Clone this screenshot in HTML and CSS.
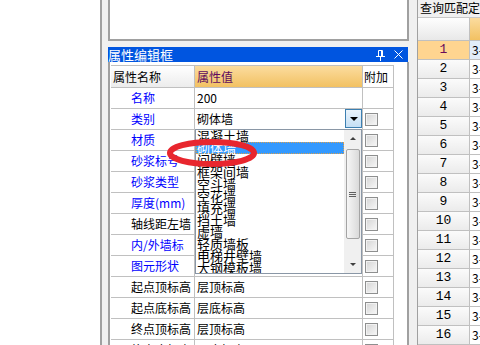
FILE: index.html
```html
<!DOCTYPE html>
<html lang="zh-CN">
<head>
    <meta charset="UTF-8">
    <title>属性编辑框</title>
    <link rel="stylesheet" href="styles.css">
</head>
<body>
<div class="app">
    <div class="blank"></div>
    <div class="split"></div>
    <div class="center">
        <div class="top-box"></div>
        <div class="title">
            <span class="title-text">属性编辑框</span>
            <svg class="pin" width="9" height="11" viewBox="0 0 9 11">
                <path d="M2.5 0.5 V6 M6.5 0.5 V6 M2.5 0.5 H6.5 M5.5 1 V6 M0 6.5 H9 M4.5 6.5 V11" stroke="#fff" fill="none"/>
            </svg>
            <svg class="close" width="9" height="9" viewBox="0 0 9 9">
                <path d="M0.5 0.5 L8.5 8.5 M8.5 0.5 L0.5 8.5" stroke="#fff" fill="none"/>
            </svg>
        </div>
        <div class="grid-area">
            <div class="prop">
                <div class="hd c1">属性名称</div>
                <div class="hd c2 orange">属性值</div>
                <div class="hd c3">附加</div>

                <div class="c1 lb blue">名称</div>
                <div class="c2">200</div>
                <div class="c3"></div>

                <div class="c1 lb blue">类别</div>
                <div class="c2 combo">砌体墙
                    <span class="combo-btn"><i class="tri-down"></i></span>
                    <div class="droplist">
                        <div class="items">
                            <div class="item">混凝土墙</div>
                            <div class="item sel">砌体墙</div>
                            <div class="item">间壁墙</div>
                            <div class="item">框架间墙</div>
                            <div class="item">空斗墙</div>
                            <div class="item">空花墙</div>
                            <div class="item">填充墙</div>
                            <div class="item">挡土墙</div>
                            <div class="item">虚墙</div>
                            <div class="item">轻质墙板</div>
                            <div class="item">电梯井壁墙</div>
                            <div class="item">大钢模板墙</div>
                        </div>
                        <div class="sb">
                            <div class="sb-arrow"><i class="tri-up"></i></div>
                            <div class="thumb"><i></i><i></i><i></i></div>
                            <div class="sb-space"></div>
                            <div class="sb-arrow"><i class="tri-down small"></i></div>
                        </div>
                    </div>
                </div>
                <div class="c3"><i class="chk"></i></div>

                <div class="c1 lb blue">材质</div>
                <div class="c2"></div>
                <div class="c3"><i class="chk"></i></div>

                <div class="c1 lb blue">砂浆标号</div>
                <div class="c2"></div>
                <div class="c3"><i class="chk"></i></div>

                <div class="c1 lb blue">砂浆类型</div>
                <div class="c2"></div>
                <div class="c3"><i class="chk"></i></div>

                <div class="c1 lb blue">厚度(mm)</div>
                <div class="c2"></div>
                <div class="c3"><i class="chk"></i></div>

                <div class="c1 lb">轴线距左墙</div>
                <div class="c2"></div>
                <div class="c3"><i class="chk"></i></div>

                <div class="c1 lb blue">内/外墙标</div>
                <div class="c2"></div>
                <div class="c3"><i class="chk"></i></div>

                <div class="c1 lb blue">图元形状</div>
                <div class="c2"></div>
                <div class="c3"><i class="chk"></i></div>

                <div class="c1 lb">起点顶标高</div>
                <div class="c2">层顶标高</div>
                <div class="c3"><i class="chk"></i></div>

                <div class="c1 lb">起点底标高</div>
                <div class="c2">层底标高</div>
                <div class="c3"><i class="chk"></i></div>

                <div class="c1 lb">终点顶标高</div>
                <div class="c2">层顶标高</div>
                <div class="c3"><i class="chk"></i></div>

                <div class="c1 lb">终点底标高</div>
                <div class="c2">层底标高</div>
                <div class="c3"><i class="chk"></i></div>
            </div>
        </div>
    </div>
    <div class="split2"></div>
    <div class="right">
        <div class="rtitle">查询匹配定位</div>
        <div class="rgrid">
            <div class="rh rn"></div><div class="rh rd orange"></div>
            <div class="rn cur">1</div><div class="rd sel">3-1</div>
            <div class="rn">2</div><div class="rd">3-1</div>
            <div class="rn">3</div><div class="rd">3-1</div>
            <div class="rn">4</div><div class="rd">3-1</div>
            <div class="rn">5</div><div class="rd">3-1</div>
            <div class="rn">6</div><div class="rd">3-1</div>
            <div class="rn">7</div><div class="rd">3-1</div>
            <div class="rn">8</div><div class="rd">3-1</div>
            <div class="rn">9</div><div class="rd">3-1</div>
            <div class="rn">10</div><div class="rd">3-1</div>
            <div class="rn">11</div><div class="rd">3-1</div>
            <div class="rn">12</div><div class="rd">3-1</div>
            <div class="rn">13</div><div class="rd">3-1</div>
            <div class="rn">14</div><div class="rd">3-1</div>
            <div class="rn">15</div><div class="rd">3-1</div>
            <div class="rn">16</div><div class="rd">3-1</div>
        </div>
    </div>
</div>
<!-- 红色圈注 -->
<svg class="mark" width="100" height="40" viewBox="0 0 100 40">
    <ellipse cx="50" cy="20" rx="42" ry="11" stroke="#e8262e" stroke-width="6" fill="none"/>
</svg>
</body>
</html>
```

FILE: styles.css
```css
* {
    margin: 0;
    padding: 0;
    box-sizing: border-box;
}

body {
    width: 480px;
    height: 345px;
    overflow: hidden;
    background: #fff;
    font-family: "Noto Sans CJK SC", "Liberation Sans", sans-serif;
    font-size: 12px;
    color: #000;
    position: relative;
}

.app {
    display: flex;
    height: 345px;
}

.blank {
    width: 100px;
    background: #fff;
}

.split {
    width: 8px;
    border-left: 2px solid #a0a0a0;
    background: #f0f0f0;
}

.center {
    width: 301px;
    display: flex;
    flex-direction: column;
    background: #f0f0f0;
}

.top-box {
    flex-shrink: 0;
    height: 41px;
    background: #fff;
    border: 2px solid #a0a0a0;
    border-top: 0;
}

.title {
    flex-shrink: 0;
    margin-top: 6px;
    height: 15px;
    margin-right: 1px;
    background: #0055e0;
    color: #fff;
    display: flex;
    align-items: center;
    font-size: 13px;
    line-height: 15px;
}

.title-text {
    flex: 1;
    white-space: nowrap;
}

.pin {
    margin-right: 9px;
    margin-top: 1px;
}

.close {
    margin-right: 5px;
}

.grid-area {
    flex: 1;
    min-height: 0;
    background: #fff;
    border-left: 2px solid #a0a0a0;
    border-right: 2px solid #a0a0a0;
    padding: 3px 0 0 1px;
}

.prop {
    display: grid;
    grid-template-columns: 84px 168px 31px;
    grid-template-rows: 23px;
    grid-auto-rows: 21px;
}

.prop > div {
    border-right: 1px solid #c0c0c0;
    border-bottom: 1px solid #c0c0c0;
    line-height: 20px;
    white-space: nowrap;
    overflow: hidden;
}

.prop .hd {
    border-top: 1px solid #c0c0c0;
    line-height: 21px;
    background: linear-gradient(#ffffff, #ececec);
    padding-left: 2px;
}

.prop .hd.c3 {
    background: #fff;
    padding-left: 1px;
}

.orange {
    background: linear-gradient(#fbdc9f, #f2c162) !important;
    color: #5e0a5e;
}

.c2 {
    padding-left: 2px;
}

.lb {
    padding-left: 20px;
}

.blue {
    color: #0000ff;
}

.prop .combo {
    position: relative;
    overflow: visible;
    z-index: 2;
}

.combo-btn {
    position: absolute;
    right: 0;
    top: 0;
    width: 17px;
    height: 19px;
    border: 1px solid #3c7fb1;
    background: linear-gradient(#eaf4fc, #c4dff5);
    display: flex;
    align-items: center;
    justify-content: center;
}

.tri-down {
    width: 0;
    height: 0;
    border-left: 4px solid transparent;
    border-right: 4px solid transparent;
    border-top: 4px solid #000;
}

.tri-down.small {
    border-left-width: 3px;
    border-right-width: 3px;
    border-top: 3px solid #404040;
}

.tri-up {
    width: 0;
    height: 0;
    border-left: 3px solid transparent;
    border-right: 3px solid transparent;
    border-bottom: 3px solid #404040;
}

.droplist {
    position: absolute;
    left: 0;
    top: 20px;
    width: 167px;
    height: 145px;
    background: #fff;
    border: 1px solid #8a97a6;
    display: flex;
    line-height: 12px;
}

.items {
    flex: 1;
    overflow: hidden;
    font-size: 13px;
}

.item {
    height: 12px;
    line-height: 12px;
    padding-left: 1px;
    white-space: nowrap;
}

.item.sel {
    background: #3399ff;
    color: #fff;
    outline: 1px dotted #d8a050;
    outline-offset: -1px;
}

.sb {
    width: 17px;
    background: #f0f0f0;
    display: flex;
    flex-direction: column;
    align-items: center;
}

.sb-arrow {
    height: 17px;
    width: 17px;
    display: flex;
    align-items: center;
    justify-content: center;
}

.thumb {
    margin-top: 2px;
    width: 14px;
    height: 90px;
    border: 1px solid #a4a4a4;
    border-radius: 2px;
    background: linear-gradient(90deg, #f6f6f6, #dadada);
    display: flex;
    flex-direction: column;
    align-items: center;
    justify-content: center;
    gap: 1px;
}

.thumb i {
    display: block;
    width: 7px;
    height: 1px;
    background: #606060;
}

.sb-space {
    flex: 1;
}

.chk {
    display: block;
    width: 13px;
    height: 13px;
    margin: 4px 0 0 2px;
    border: 1px solid #8e8f8f;
    background: linear-gradient(135deg, #d4d4d4, #f8f8f8);
    box-shadow: inset 0 0 0 1px #f2f2f2;
}

.split2 {
    width: 8px;
    background: #f0f0f0;
}

.right {
    width: 63px;
    border-left: 1px solid #a0a0a0;
    background: #f0f0f0;
    overflow: hidden;
}

.rtitle {
    height: 17px;
    line-height: 16px;
    padding-left: 2px;
    white-space: nowrap;
    overflow: hidden;
}

.rgrid {
    display: grid;
    grid-template-columns: 52px 60px;
    grid-template-rows: 23px;
    grid-auto-rows: 19px;
    border-top: 1px solid #c8c8c8;
}

.rgrid > div {
    border-right: 1px solid #c0c0c0;
    border-bottom: 1px solid #c0c0c0;
    line-height: 18px;
    white-space: nowrap;
    overflow: hidden;
}

.rn {
    text-align: center;
    font-family: "Liberation Mono", monospace;
    font-size: 13px;
    background: linear-gradient(#fbfbfb, #ebebeb);
}

.rn.cur {
    background: #ffd590;
    color: #6a0a5a;
}

.rh.rn {
    background: linear-gradient(#fefefe, #e8e8e8);
}

.rd {
    background: #fff;
    padding-left: 2px;
    font-size: 12px;
}

.rd.sel {
    background: #e2edf9;
}

.mark {
    position: absolute;
    left: 162px;
    top: 133px;
    z-index: 5;
}
```
